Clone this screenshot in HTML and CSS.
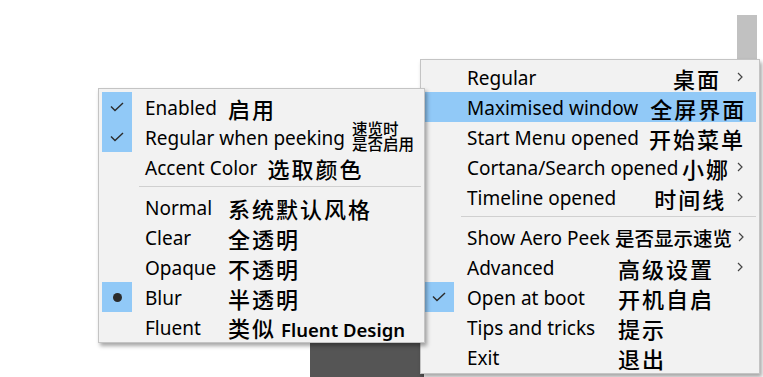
FILE: index.html
```html
<!DOCTYPE html>
<html lang="zh-CN">
<head>
    <meta charset="UTF-8">
    <title>TranslucentTB 菜单说明</title>
    <link rel="stylesheet" href="styles.css">
</head>
<body>
    <!-- fundo: barra de rolagem e pedaço da barra de tarefas -->
    <div class="scroll-thumb"></div>
    <div class="taskbar-piece"></div>

    <!-- menu principal da bandeja -->
    <div class="menu menu-tray">
        <div class="item">
            <span class="mark"></span>
            <span class="label">Regular</span>
            <span class="note note-regular">桌面</span>
            <span class="arrow"><svg width="6" height="10" viewBox="0 0 6 10"><polyline points="1,1 5,5 1,9" /></svg></span>
        </div>
        <div class="item selected">
            <span class="mark"></span>
            <span class="label">Maximised window</span>
            <span class="note note-max">全屏界面</span>
        </div>
        <div class="item">
            <span class="mark"></span>
            <span class="label">Start Menu opened</span>
            <span class="note note-start">开始菜单</span>
        </div>
        <div class="item">
            <span class="mark"></span>
            <span class="label">Cortana/Search opened</span>
            <span class="note note-cortana">小娜</span>
            <span class="arrow"><svg width="6" height="10" viewBox="0 0 6 10"><polyline points="1,1 5,5 1,9" /></svg></span>
        </div>
        <div class="item">
            <span class="mark"></span>
            <span class="label">Timeline opened</span>
            <span class="note note-timeline">时间线</span>
            <span class="arrow"><svg width="6" height="10" viewBox="0 0 6 10"><polyline points="1,1 5,5 1,9" /></svg></span>
        </div>
        <div class="separator"></div>
        <div class="item">
            <span class="mark"></span>
            <span class="label">Show Aero Peek</span>
            <span class="note note-peek">是否显示速览</span>
            <span class="arrow"><svg width="6" height="10" viewBox="0 0 6 10"><polyline points="1,1 5,5 1,9" /></svg></span>
        </div>
        <div class="item">
            <span class="mark"></span>
            <span class="label">Advanced</span>
            <span class="note">高级设置</span>
            <span class="arrow"><svg width="6" height="10" viewBox="0 0 6 10"><polyline points="1,1 5,5 1,9" /></svg></span>
        </div>
        <div class="item">
            <span class="mark on"><svg class="check" width="14" height="10" viewBox="0 0 14 10"><polyline points="1,4.5 5,8.5 13,1" /></svg></span>
            <span class="label">Open at boot</span>
            <span class="note">开机自启</span>
        </div>
        <div class="item">
            <span class="mark"></span>
            <span class="label">Tips and tricks</span>
            <span class="note">提示</span>
        </div>
        <div class="item">
            <span class="mark"></span>
            <span class="label">Exit</span>
            <span class="note">退出</span>
        </div>
    </div>

    <!-- submenu de estilo (fica por cima) -->
    <div class="menu menu-style">
        <div class="item">
            <span class="mark on"><svg class="check" width="14" height="10" viewBox="0 0 14 10"><polyline points="1,4.5 5,8.5 13,1" /></svg></span>
            <span class="label">Enabled</span>
            <span class="note">启用</span>
        </div>
        <div class="item">
            <span class="mark on"><svg class="check" width="14" height="10" viewBox="0 0 14 10"><polyline points="1,4.5 5,8.5 13,1" /></svg></span>
            <span class="label">Regular when peeking</span>
            <span class="note-stack"><span>速览时</span><span>是否启用</span></span>
        </div>
        <div class="item">
            <span class="mark"></span>
            <span class="label">Accent Color</span>
            <span class="note note-accent">选取颜色</span>
        </div>
        <div class="separator"></div>
        <div class="item">
            <span class="mark"></span>
            <span class="label">Normal</span>
            <span class="note">系统默认风格</span>
        </div>
        <div class="item">
            <span class="mark"></span>
            <span class="label">Clear</span>
            <span class="note">全透明</span>
        </div>
        <div class="item">
            <span class="mark"></span>
            <span class="label">Opaque</span>
            <span class="note">不透明</span>
        </div>
        <div class="item">
            <span class="mark on"><span class="dot"></span></span>
            <span class="label">Blur</span>
            <span class="note">半透明</span>
        </div>
        <div class="item">
            <span class="mark"></span>
            <span class="label">Fluent</span>
            <span class="note">类似<span class="note-en">Fluent Design</span></span>
        </div>
    </div>
</body>
</html>
```

FILE: styles.css
```css
/* Página */
body {
    margin: 0;
    width: 763px;
    height: 377px;
    overflow: hidden;
    position: relative;
    background-color: #FFFFFF;
    font-family: "Noto Sans", "Noto Sans CJK SC", sans-serif;
    font-size: 19px;
    color: #000000;
}

/* Fundo */
.scroll-thumb {
    position: absolute;
    left: 737px;
    top: 15px;
    width: 20px;
    height: 50px;
    background-color: #C1C1C1;
}

.taskbar-piece {
    position: absolute;
    left: 310px;
    top: 338px;
    width: 114px;
    height: 39px;
    background-color: #555555;
}

/* Menus */
.menu {
    position: absolute;
    background-color: #F2F2F2;
    border: solid 1px #C4C4C4;
    box-shadow: 2px 3px 4px rgba(0, 0, 0, 0.35);
}

.menu-tray {
    left: 420px;
    top: 59px;
    width: 332px;
    padding: 2px 3px 1px 3px;
}

.menu-style {
    left: 98px;
    top: 88px;
    width: 319px;
    padding: 3px 3px 0 3px;
    z-index: 2;
}

.item {
    display: flex;
    align-items: center;
    height: 30px;
    white-space: nowrap;
}

.item.selected {
    background-color: #91C9F7;
}

.mark {
    flex: none;
    width: 30px;
    height: 30px;
    display: flex;
    align-items: center;
    justify-content: center;
}

.mark.on {
    background-color: #91C9F7;
}

.check polyline {
    fill: none;
    stroke: #2B2B2B;
    stroke-width: 1.4;
}

.dot {
    width: 9px;
    height: 9px;
    border-radius: 50%;
    background-color: #2B2B2B;
}

.label {
    margin-left: 13px;
    padding-top: 1px;
}

.menu-tray .label {
    min-width: 143px;
}

.menu-style .label {
    min-width: 75px;
}

.separator {
    height: 1px;
    margin: 4px 0 5px 37px;
    background-color: #D0D0D0;
}

.arrow {
    margin-left: auto;
    margin-right: 6px;
    width: 20px;
    display: flex;
    justify-content: center;
}

.arrow polyline {
    fill: none;
    stroke: #444444;
    stroke-width: 1.2;
}

/* Anotações em chinês */
.note {
    margin-left: 8px;
    padding-top: 2px;
    font-family: "Noto Sans CJK SC", sans-serif;
    font-size: 22px;
    font-weight: 500;
    letter-spacing: 2px;
    line-height: 28px;
}

.note-regular {
    margin-left: 63px;
}

.note-max {
    margin-left: 12px;
}

.note-start {
    margin-left: 10px;
}

.note-cortana {
    margin-left: 5px;
}

.note-timeline {
    margin-left: 38px;
}

.note-peek {
    margin-left: 5px;
    font-size: 19.5px;
    letter-spacing: 0;
}

.note-accent {
    margin-left: 10px;
}

.note-stack {
    display: flex;
    flex-direction: column;
    margin-left: 7px;
    margin-bottom: 3px;
    font-family: "Noto Sans CJK SC", sans-serif;
    font-size: 15.5px;
    font-weight: 500;
    line-height: 15px;
}

.note-en {
    margin-left: 5px;
    font-family: "Noto Sans", sans-serif;
    font-size: 18.5px;
    font-weight: 600;
    letter-spacing: 0;
}
```
